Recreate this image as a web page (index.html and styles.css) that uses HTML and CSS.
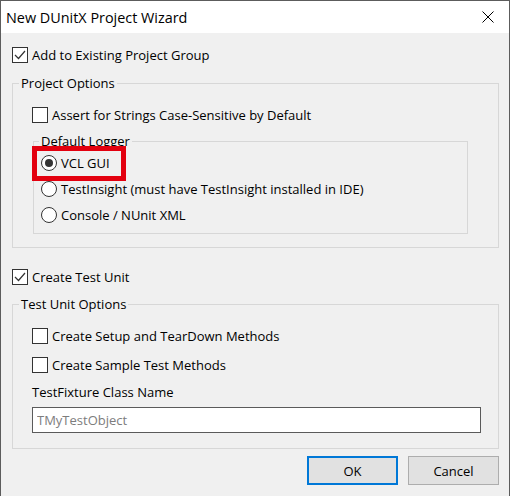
FILE: index.html
```html
<!DOCTYPE html>
<html lang="en">
  <head>
    <meta charset="UTF-8" />
    <meta name="viewport" content="width=device-width, initial-scale=1.0" />
    <title>New DUnitX Project Wizard</title>
    <link rel="stylesheet" href="styles.css">
  </head>
  <body>
    <div class="window">
      <div class="titlebar">
        <span class="title">New DUnitX Project Wizard</span>
        <svg class="close" width="12" height="12" viewBox="0 0 12 12">
          <path d="M0.5 0.5 L11.5 11.5 M11.5 0.5 L0.5 11.5" stroke="#000" stroke-width="1" fill="none" />
        </svg>
      </div>

      <div class="content">
        <label class="check first">
          <span class="box checked">
            <svg width="14" height="14" viewBox="0 0 14 14"><path d="M2 7 L5.5 10.5 L12 3" stroke="#333" stroke-width="1.2" fill="none" /></svg>
          </span>
          Add to Existing Project Group
        </label>

        <fieldset class="group project">
          <legend>Project Options</legend>
          <div class="group-body options">
            <label class="check">
              <span class="box"></span>
              Assert for Strings Case-Sensitive by Default
            </label>

            <fieldset class="group inner">
              <legend>Default Logger</legend>
              <div class="group-body logger">
                <label class="radio highlight">
                  <span class="dot selected"></span>
                  VCL GUI
                </label>
                <label class="radio">
                  <span class="dot"></span>
                  TestInsight (must have TestInsight installed in IDE)
                </label>
                <label class="radio">
                  <span class="dot"></span>
                  Console / NUnit XML
                </label>
              </div>
            </fieldset>
          </div>
        </fieldset>

        <label class="check second">
          <span class="box checked">
            <svg width="14" height="14" viewBox="0 0 14 14"><path d="M2 7 L5.5 10.5 L12 3" stroke="#333" stroke-width="1.2" fill="none" /></svg>
          </span>
          Create Test Unit
        </label>

        <fieldset class="group test-unit">
          <legend>Test Unit Options</legend>
          <div class="group-body unit">
            <label class="check">
              <span class="box"></span>
              Create Setup and TearDown Methods
            </label>
            <label class="check">
              <span class="box"></span>
              Create Sample Test Methods
            </label>
            <label class="field-label" for="fixture">TestFixture Class Name</label>
            <input type="text" id="fixture" placeholder="TMyTestObject" />
          </div>
        </fieldset>

        <div class="buttons">
          <button type="button" class="default">OK</button>
          <button type="button">Cancel</button>
        </div>
      </div>
    </div>
  </body>
</html>
```

FILE: styles.css
```css
body {
  margin: 0;
  font-family: "Open Sans", "Noto Sans", sans-serif;
  font-size: 13px;
  color: #000;
  background: #f0f0f0;
}
.window {
  width: 510px;
  height: 496px;
  box-sizing: border-box;
  border: 1px solid #5c5c5c;
  border-bottom: none;
  background: #f0f0f0;
}
.titlebar {
  height: 32px;
  background: #fff;
  display: flex;
  align-items: center;
  justify-content: space-between;
  padding: 0 15px 0 5px;
}
.title {
  font-size: 14.4px;
}
.content {
  padding: 0 10px 0 11px;
}
.check {
  display: flex;
  align-items: center;
  gap: 4px;
  height: 20px;
}
.check.first {
  margin-top: 12px;
}
.check.second {
  margin-top: 19px;
}
.box {
  width: 14px;
  height: 14px;
  border: 1px solid #333;
  background: #fff;
  display: flex;
  align-items: center;
  justify-content: center;
}
.group {
  margin: 0;
  padding: 0;
  min-width: 0;
  border: 1px solid #d7d7d7;
}
.group legend {
  margin-left: 6px;
  padding: 0 2px;
  line-height: 18px;
}
.group.project {
  margin-top: 9px;
}
.group.test-unit {
  margin-top: 8px;
}
.group.inner {
  margin: 7px 0 0 1px;
}
.group.inner legend {
  margin-left: 5px;
}
.options {
  padding: 13px 30px 13px 19px;
}
.logger {
  padding: 3px 8px 8px 7px;
  display: flex;
  flex-direction: column;
  gap: 6px;
}
.radio {
  display: flex;
  align-items: center;
  gap: 4px;
  height: 20px;
}
.dot {
  width: 14px;
  height: 14px;
  border: 1px solid #333;
  border-radius: 50%;
  background: #fff;
  display: flex;
  align-items: center;
  justify-content: center;
}
.dot.selected::before {
  content: "";
  width: 8px;
  height: 8px;
  border-radius: 50%;
  background: #333;
}
.highlight {
  position: relative;
  align-self: flex-start;
}
.highlight::after {
  content: "";
  position: absolute;
  left: -9px;
  top: -7px;
  right: -16px;
  bottom: -8px;
  border: 5px solid #e3000f;
}
.unit {
  padding: 13px 17px 15px 19px;
  display: flex;
  flex-direction: column;
}
.unit .check + .check {
  margin-top: 9px;
}
.field-label {
  margin-top: 8px;
  line-height: 18px;
}
input {
  margin-top: 6px;
  height: 26px;
  box-sizing: border-box;
  border: 1px solid #5a5a5a;
  padding: 0 4px;
  font-family: inherit;
  font-size: 13px;
  background: #fff;
}
input::placeholder {
  color: #7d7d7d;
}
.buttons {
  display: flex;
  justify-content: flex-end;
  gap: 10px;
  margin-top: 7px;
}
button {
  width: 91px;
  height: 29px;
  background: #e1e1e1;
  border: 1px solid #adadad;
  font-family: inherit;
  font-size: 13px;
  color: #000;
  padding: 0;
}
button.default {
  border: 2px solid #0078d7;
}
```
